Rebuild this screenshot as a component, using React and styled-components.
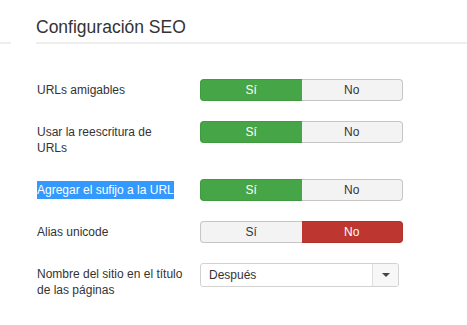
import React from "react";
import styled, { createGlobalStyle } from "styled-components";

const Global = createGlobalStyle`
  html, body { margin: 0; padding: 0; background: #fff; }
  body { font-family: "Liberation Sans", Arial, sans-serif; color: #333; }
`;

const Page = styled.div`
  width: 467px;
  height: 325px;
  overflow: hidden;
`;

const Header = styled.div`
  display: flex;
  align-items: flex-end;
  gap: 25px;
`;

const Stub = styled.div`
  width: 11px;
  border-bottom: 2px solid #eeeeee;
`;

const Title = styled.h3`
  flex: 1;
  margin: 17px 0 0;
  padding-bottom: 5px;
  font-size: 17.5px;
  line-height: 20px;
  font-weight: normal;
  color: #333;
  border-bottom: 2px solid #eeeeee;
`;

const Form = styled.div`
  display: flex;
  flex-direction: column;
  gap: 20px;
  padding: 35px 0 0 37px;
`;

const Row = styled.div`
  display: flex;
  align-items: flex-start;
`;

const Label = styled.div`
  width: 147px;
  margin-right: 16px;
  padding: 3px 0;
  font-size: 12px;
  line-height: 16px;
  color: #333;
`;

const Selected = styled.span`
  background: #3399ff;
  color: #fff;
  padding: 2px 0;
`;

const Toggle = styled.div`
  display: flex;
  width: 203px;
  height: 22px;
`;

const palette = {
  success: { bg: "#46a546", border: "#3f9a40", color: "#fff" },
  danger: { bg: "#bd362f", border: "#b0322b", color: "#fff" },
  off: { bg: "#f3f3f3", border: "#c6c6c6", color: "#333" },
};

const ToggleButton = styled.div`
  flex: 1;
  display: flex;
  align-items: center;
  justify-content: center;
  box-sizing: border-box;
  font-size: 12px;
  background: ${(p) => palette[p.$variant].bg};
  color: ${(p) => palette[p.$variant].color};
  border: 1px solid ${(p) => palette[p.$variant].border};
  ${(p) =>
    p.$first
      ? "border-radius: 4px 0 0 4px; border-right: none;"
      : "border-radius: 0 4px 4px 0; border-left: none;"}
`;

const Select = styled.div`
  display: flex;
  width: 199px;
  height: 24px;
  box-sizing: border-box;
  border: 1px solid #d2d2d2;
  border-radius: 3px;
  background: #fff;
`;

const SelectValue = styled.div`
  flex: 1;
  padding-left: 8px;
  font-size: 12px;
  line-height: 22px;
  color: #333;
`;

const SelectArrow = styled.div`
  width: 25px;
  display: flex;
  align-items: center;
  justify-content: center;
  border-left: 1px solid #dedede;
  background: #f7f7f7;
  border-radius: 0 3px 3px 0;
  &::after {
    content: "";
    border-top: 4px solid #444;
    border-left: 4px solid transparent;
    border-right: 4px solid transparent;
  }
`;

const YesNo = ({ value }) => (
  <Toggle>
    <ToggleButton $first $variant={value ? "success" : "off"}>Sí</ToggleButton>
    <ToggleButton $variant={value ? "off" : "danger"}>No</ToggleButton>
  </Toggle>
);

export default function App() {
  return (
    <Page>
      <Global />
      <Header>
        <Stub />
        <Title>Configuración SEO</Title>
      </Header>
      <Form>
        <Row>
          <Label>URLs amigables</Label>
          <YesNo value />
        </Row>
        <Row>
          <Label>Usar la reescritura de URLs</Label>
          <YesNo value />
        </Row>
        <Row>
          <Label>
            <Selected>Agregar el sufijo a la URL</Selected>
          </Label>
          <YesNo value />
        </Row>
        <Row>
          <Label>Alias unicode</Label>
          <YesNo value={false} />
        </Row>
        <Row>
          <Label>Nombre del sitio en el título de las páginas</Label>
          <Select>
            <SelectValue>Después</SelectValue>
            <SelectArrow />
          </Select>
        </Row>
      </Form>
    </Page>
  );
}
